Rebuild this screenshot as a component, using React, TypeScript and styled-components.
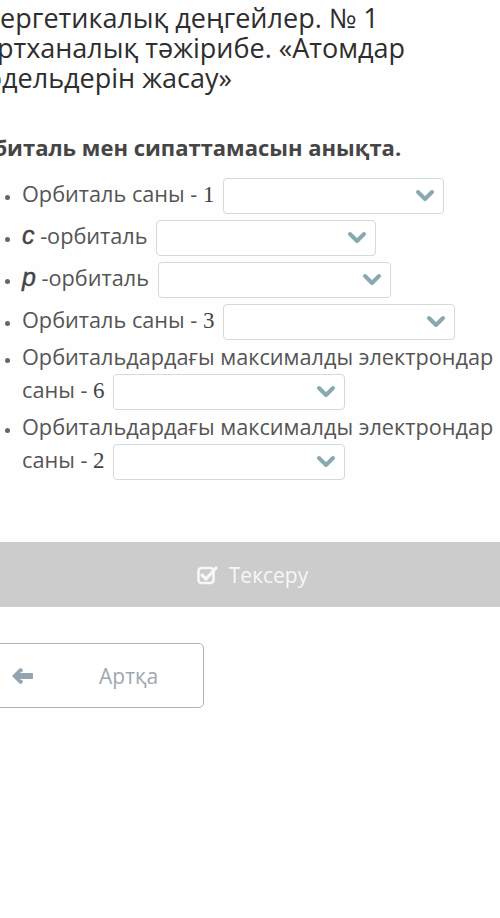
import React from "react";
import styled, { createGlobalStyle } from "styled-components";

const Global = createGlobalStyle`
  html, body { margin: 0; padding: 0; background: #fefefe; }
  body { overflow: hidden; font-family: "Open Sans", "Noto Sans", sans-serif; }
`;

const Page = styled.div`
  width: 500px;
  height: 918px;
  overflow: hidden;
  display: flex;
  flex-direction: column;
`;

const Title = styled.h1`
  margin: 3px 0 0 -34px;
  font-weight: 400;
  font-size: 27px;
  line-height: 30px;
  color: #2e2e2e;
  white-space: nowrap;
`;

const Heading = styled.h2`
  margin: 40px 0 0 -38px;
  font-weight: 700;
  font-size: 22px;
  line-height: 28px;
  color: #454545;
  white-space: nowrap;
`;

const List = styled.ul`
  margin: 14px 0 0 0;
  padding: 0 0 0 22px;
  list-style: disc;
  color: #555;
  font-size: 21.7px;
  line-height: 28px;
  li::marker { color: #666; font-size: 15px; }
`;

const Item = styled.li`
  padding: 0;
`;

const Num = styled.span`
  font-family: "Liberation Serif", "DejaVu Serif", serif;
  font-size: 23px;
  color: #444;
`;

const Var = styled.span`
  font-family: "Liberation Sans", Arial, sans-serif;
  font-style: italic;
  font-size: 25px;
  color: #444;
  -webkit-text-stroke: 0.4px #444;
`;

const Select = styled.span<{ $w: number }>`
  display: inline-flex;
  align-items: center;
  justify-content: flex-end;
  box-sizing: border-box;
  width: ${(p) => p.$w}px;
  height: 36px;
  margin: 3px 0 3px 3px;
  padding-right: 8px;
  vertical-align: middle;
  border: 1.5px solid #d3dadb;
  border-radius: 4px;
  background: #fff;
`;

const Chevron = () => (
  <svg width="20" height="14" viewBox="0 0 20 14">
    <polyline
      points="3,3 10,10 17,3"
      fill="none"
      stroke="#89a9b1"
      strokeWidth="4"
      strokeLinecap="round"
      strokeLinejoin="round"
    />
  </svg>
);

const Dropdown = ({ w }: { w: number }) => (
  <Select $w={w}>
    <Chevron />
  </Select>
);

const CheckBar = styled.button`
  margin-top: 59px;
  width: 500px;
  height: 65px;
  border: none;
  background: #cccccc;
  color: #f7f7f7;
  font-family: "Open Sans", sans-serif;
  font-size: 21px;
  display: flex;
  align-items: center;
  justify-content: center;
  gap: 10px;
  padding: 0 0 0 5px;
`;

const BackButton = styled.button`
  margin: 36px 0 0 -12px;
  width: 216px;
  height: 65px;
  box-sizing: border-box;
  border: 1.5px solid #aab3b8;
  border-radius: 5px;
  background: #fff;
  display: flex;
  align-items: center;
  padding: 0 0 0 22px;
  font-family: "Open Sans", sans-serif;
  font-size: 21px;
  color: #9ea8ae;
`;

const BackLabel = styled.span`
  margin-left: 65px;
`;

const CheckIcon = () => (
  <svg width="22" height="20" viewBox="0 0 22 20">
    <rect x="1.5" y="3" width="15" height="15" rx="3" fill="none" stroke="#f7f7f7" strokeWidth="2.6" />
    <polyline points="5,10 9,14 19,3" fill="none" stroke="#f7f7f7" strokeWidth="3.2" strokeLinecap="round" strokeLinejoin="round" />
  </svg>
);

const ArrowIcon = () => (
  <svg width="23" height="18" viewBox="0 0 23 18">
    <path
      d="M1 9 L8.5 1.5 Q9.5 0.5 10.5 1.5 L11.5 2.5 Q12.5 3.5 11.5 4.5 L8.5 6 L21 6 Q22 6 22 7 L22 11 Q22 12 21 12 L8.5 12 L11.5 13.5 Q12.5 14.5 11.5 15.5 L10.5 16.5 Q9.5 17.5 8.5 16.5 Z"
      fill="#92a5b0"
    />
  </svg>
);

export default function App() {
  return (
    <Page>
      <Global />
      <Title>
        Энергетикалық деңгейлер. № 1
        <br />
        Зертханалық тәжірибе. «Атомдар
        <br />
        модельдерін жасау»
      </Title>
      <Heading>Орбиталь мен сипаттамасын анықта.</Heading>
      <List>
        <Item>
          Орбиталь саны - <Num>1</Num> <Dropdown w={221} />
        </Item>
        <Item>
          <Var>c</Var> -орбиталь <Dropdown w={220} />
        </Item>
        <Item>
          <Var>p</Var> -орбиталь <Dropdown w={233} />
        </Item>
        <Item>
          Орбиталь саны - <Num>3</Num> <Dropdown w={232} />
        </Item>
        <Item>
          Орбитальдардағы максималды электрондар саны - <Num>6</Num> <Dropdown w={232} />
        </Item>
        <Item>
          Орбитальдардағы максималды электрондар саны - <Num>2</Num> <Dropdown w={232} />
        </Item>
      </List>
      <CheckBar>
        <CheckIcon />
        Тексеру
      </CheckBar>
      <BackButton>
        <ArrowIcon />
        <BackLabel>Артқа</BackLabel>
      </BackButton>
    </Page>
  );
}
